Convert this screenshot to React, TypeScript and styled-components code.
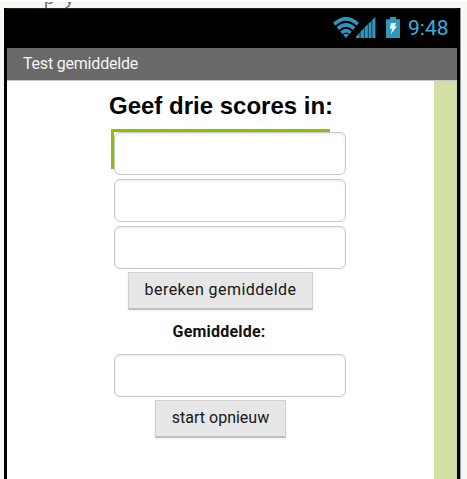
import React from "react";
import styled, { createGlobalStyle } from "styled-components";

const GlobalStyle = createGlobalStyle`
  * { box-sizing: border-box; }
  body { margin: 0; background: #f7f8f2; overflow: hidden; }
`;

const Page = styled.div`
  width: 467px;
  height: 479px;
  overflow: hidden;
  display: flex;
  flex-direction: column;
  background: #f7f8f2;
  border-top: 2px solid #fff;
  font-family: "Liberation Sans", Arial, sans-serif;
`;

const CutLine = styled.div`
  height: 6px;
  flex: none;
  overflow: hidden;
  display: flex;
  align-items: flex-end;
  gap: 11px;
  padding-left: 44px;
  color: #66667c;
  font-size: 18px;
  line-height: 20px;
`;

const Phone = styled.div`
  width: 456px;
  height: 471px;
  flex: none;
  margin-left: 4px;
  border-left: 3px solid #000;
  border-right: 3px solid #000;
  background: #fff;
  box-shadow: 1px 0 0 #999;
`;

const StatusBar = styled.header`
  height: 40px;
  background: #000;
  border-top: 1px solid #292929;
  display: flex;
  justify-content: flex-end;
  align-items: flex-start;
  padding: 7px 7px 0 0;
`;

const StatusIcons = styled.div`
  display: flex;
  align-items: flex-end;
  height: 22px;
`;

const Clock = styled.span`
  width: 42px;
  margin-left: 8px;
  color: #35b2e1;
  font: 21px/24px Roboto, sans-serif;
  white-space: nowrap;
`;

const TitleBar = styled.div`
  height: 33px;
  background: #696969;
  border-bottom: 1px solid #c8c6c8;
  padding-left: 16px;
  color: #f5f5f5;
  font: 16px/32px Roboto, sans-serif;
  letter-spacing: -0.2px;
`;

const Content = styled.div`
  height: 398px;
  display: flex;
`;

const Main = styled.main`
  flex: 1;
  padding-left: 102px;
`;

const Stripe = styled.aside`
  width: 23px;
  flex: none;
  background: #d2dfa3;
`;

const Heading = styled.h1`
  margin: 0;
  padding-top: 11px;
  height: 48px;
  font-size: 24px;
  line-height: 28px;
  white-space: nowrap;
  color: #000;
`;

const Form = styled.div`
  width: 232px;
  margin-left: 5px;
`;

const Field = styled.input`
  display: block;
  width: 232px;
  height: 43px;
  flex: none;
  border: 1px solid #c9c9c9;
  border-radius: 6px;
  background: #fff;
  box-shadow: inset 0 1px 3px #e8e8e8;
  outline: none;
`;

const Fields = styled.div`
  display: flex;
  flex-direction: column;
  gap: 4px;
`;

const FirstField = styled.div`
  position: relative;
  padding-top: 3px;
`;

/* Highlight that peeks out behind the first field. */
const FocusFrame = styled.div`
  position: absolute;
  left: -3px;
  top: 0;
  width: 219px;
  height: 40px;
  border-top: 3px solid #8fbe00;
  border-left: 3px solid #8fbe00;
`;

const FieldLayer = styled.div`
  position: relative;
`;

const Actions = styled.div`
  width: 213px;
  padding-top: 3px;
  display: flex;
  flex-direction: column;
  align-items: center;
`;

const Button = styled.button<{ $width: number; $spacing?: number }>`
  width: ${(p) => p.$width}px;
  height: 38px;
  padding: 0 0 1px;
  border: 1px solid #cfcfcf;
  border-bottom: 2px solid #bebebe;
  border-radius: 0;
  background: #e7e7e7;
  box-shadow: 0 1px 3px #eee;
  color: #161616;
  font: 16px/20px Roboto, sans-serif;
  letter-spacing: ${(p) => p.$spacing ?? 0}px;
  white-space: nowrap;
`;

const Label = styled.label`
  height: 44px;
  padding-right: 3px;
  font: bold 16px/44px Roboto, sans-serif;
  letter-spacing: 0.2px;
  color: #111;
`;

const WifiIcon = () => (
  <svg width="26" height="21" viewBox="0 0 26 20" preserveAspectRatio="none" fill="none" stroke="#2f96bd" strokeWidth="3.4">
    <path d="M1.2 6.8Q13-3.4 24.8 6.8M4.9 11Q13 4 21.1 11M8.4 15Q13 11 17.6 15" />
    <path d="M10.1 17Q13 14.8 15.9 17L13 20Z" fill="#2f96bd" stroke="none" />
  </svg>
);

const SignalSvg = styled.svg`
  margin-left: -3px;
`;

const SignalIcon = () => (
  <SignalSvg width="20" height="21" viewBox="0 0 20 20" preserveAspectRatio="none" fill="#2f96bd">
    <path d="M0 20V18.6L3.7 15V20ZM4.4 20V14L7.9 10.8V20ZM8.5 20V9.9L11.9 7V20ZM12.5 20V6.2L15.6 3.5V20ZM16.2 20V2.7L19.4 0V20Z" />
  </SignalSvg>
);

const BatterySvg = styled.svg`
  margin-left: 10px;
`;

const BatteryIcon = () => (
  <BatterySvg width="14" height="21" viewBox="0 0 14 21">
    <path d="M0 2.3H4V0H10V2.3H14V21H0Z" fill="#2f96bd" />
    <path d="M5 6H10L8.7 9.3H11L5 17L6 11.7H3.7Z" fill="#eaf8ff" />
  </BatterySvg>
);

export default function App() {
  return (
    <>
      <GlobalStyle />
      <Page>
        <CutLine><span>p</span><span>y</span></CutLine>
        <Phone>
          <StatusBar>
            <StatusIcons>
              <WifiIcon />
              <SignalIcon />
              <BatteryIcon />
            </StatusIcons>
            <Clock>9:48</Clock>
          </StatusBar>
          <TitleBar>Test gemiddelde</TitleBar>
          <Content>
            <Main>
              <Heading>Geef drie scores in:</Heading>
              <Form>
                <Fields>
                  <FirstField>
                    <FocusFrame />
                    <FieldLayer><Field aria-label="Score 1" /></FieldLayer>
                  </FirstField>
                  <Field aria-label="Score 2" />
                  <Field aria-label="Score 3" />
                </Fields>
                <Actions>
                  <Button $width={185} $spacing={0.45}>bereken gemiddelde</Button>
                  <Label>Gemiddelde:</Label>
                </Actions>
                <Field aria-label="Gemiddelde" readOnly />
                <Actions>
                  <Button $width={131}>start opnieuw</Button>
                </Actions>
              </Form>
            </Main>
            <Stripe />
          </Content>
        </Phone>
      </Page>
    </>
  );
}
